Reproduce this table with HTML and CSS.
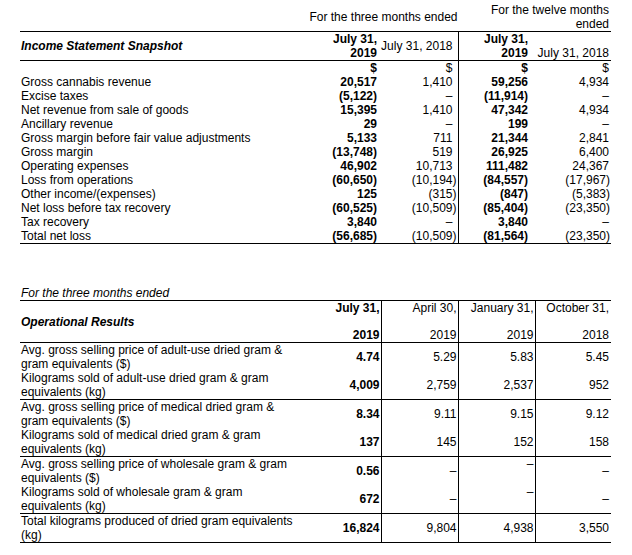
FILE: index.html
```html
<!DOCTYPE html>
<html>
<head>
<meta charset="utf-8">
<link rel="stylesheet" href="styles.css">
</head>
<body>
<div class="page">
<table class="grid snap">
<colgroup><col class="s-label"><col class="s-c1"><col class="s-c2"><col class="s-c3"><col class="s-c4"></colgroup>
<tr class="period">
<td></td>
<td colspan="2" class="center">For the three months ended</td>
<td colspan="2" class="right bottom pr2">For the twelve months<br>ended</td>
</tr>
<tr class="dates">
<td class="title">Income Statement Snapshot</td>
<td class="right b pr3">July 31,<br>2019</td>
<td class="right pr5">July 31, 2018</td>
<td class="right b pr3 sep">July 31,<br>2019</td>
<td class="right pr2 bottom">July 31, 2018</td>
</tr>
<tr><td></td><td class="right b pr3">$</td><td class="right pr5">$</td><td class="right b pr3 sep">$</td><td class="right pr2">$</td></tr>
<tr><td>Gross cannabis revenue</td><td class="right b pr3">20,517</td><td class="right pr5">1,410</td><td class="right b pr3 sep">59,256</td><td class="right pr2">4,934</td></tr>
<tr><td>Excise taxes</td><td class="right b pr3">(5,122)</td><td class="right pr5">–</td><td class="right b pr3 sep">(11,914)</td><td class="right pr2">–</td></tr>
<tr><td>Net revenue from sale of goods</td><td class="right b pr3">15,395</td><td class="right pr5">1,410</td><td class="right b pr3 sep">47,342</td><td class="right pr2">4,934</td></tr>
<tr><td>Ancillary revenue</td><td class="right b pr3">29</td><td class="right pr5">–</td><td class="right b pr3 sep">199</td><td class="right pr2">–</td></tr>
<tr><td>Gross margin before fair value adjustments</td><td class="right b pr3">5,133</td><td class="right pr5">711</td><td class="right b pr3 sep">21,344</td><td class="right pr2">2,841</td></tr>
<tr><td>Gross margin</td><td class="right b pr3">(13,748)</td><td class="right pr5">519</td><td class="right b pr3 sep">26,925</td><td class="right pr2">6,400</td></tr>
<tr><td>Operating expenses</td><td class="right b pr3">46,902</td><td class="right pr5">10,713</td><td class="right b pr3 sep">111,482</td><td class="right pr2">24,367</td></tr>
<tr><td>Loss from operations</td><td class="right b pr3">(60,650)</td><td class="right pr1">(10,194)</td><td class="right b pr3 sep">(84,557)</td><td class="right pr1">(17,967)</td></tr>
<tr><td>Other income/(expenses)</td><td class="right b pr3">125</td><td class="right pr1">(315)</td><td class="right b pr3 sep">(847)</td><td class="right pr1">(5,383)</td></tr>
<tr><td>Net loss before tax recovery</td><td class="right b pr3">(60,525)</td><td class="right pr1">(10,509)</td><td class="right b pr3 sep">(85,404)</td><td class="right pr1">(23,350)</td></tr>
<tr><td>Tax recovery</td><td class="right b pr3">3,840</td><td class="right pr5">–</td><td class="right b pr3 sep">3,840</td><td class="right pr2">–</td></tr>
<tr class="last"><td>Total net loss</td><td class="right b pr3">(56,685)</td><td class="right pr1">(10,509)</td><td class="right b pr3 sep">(81,564)</td><td class="right pr1">(23,350)</td></tr>
</table>

<table class="grid ops">
<colgroup><col class="o-label"><col class="o-c"><col class="o-c2"><col class="o-c2"><col class="o-c4"></colgroup>
<tr class="cap"><td colspan="5" class="it">For the three months ended</td></tr>
<tr class="head">
<td class="title">Operational Results</td>
<td class="vr b"><div class="stack"><span>July 31,</span><span>2019</span></div></td>
<td class="vr"><div class="stack"><span>April 30,</span><span>2019</span></div></td>
<td class="vr"><div class="stack"><span>January 31,</span><span>2019</span></div></td>
<td class="last-c"><div class="stack"><span>October 31,</span><span>2018</span></div></td>
</tr>
<tr class="dbl"><td>Avg. gross selling price of adult-use dried gram &amp;<br>gram equivalents ($)</td><td class="vr b">4.74</td><td class="vr">5.29</td><td class="vr">5.83</td><td class="last-c">5.45</td></tr>
<tr class="dbl grp"><td>Kilograms sold of adult-use dried gram &amp; gram<br>equivalents (kg)</td><td class="vr b">4,009</td><td class="vr">2,759</td><td class="vr">2,537</td><td class="last-c">952</td></tr>
<tr class="dbl"><td>Avg. gross selling price of medical dried gram &amp;<br>gram equivalents ($)</td><td class="vr b">8.34</td><td class="vr">9.11</td><td class="vr">9.15</td><td class="last-c">9.12</td></tr>
<tr class="dbl grp"><td>Kilograms sold of medical dried gram &amp; gram<br>equivalents (kg)</td><td class="vr b">137</td><td class="vr">145</td><td class="vr">152</td><td class="last-c">158</td></tr>
<tr class="dbl"><td>Avg. gross selling price of wholesale gram &amp; gram<br>equivalents ($)</td><td class="vr b">0.56</td><td class="vr">–</td><td class="vr top">–</td><td class="last-c">–</td></tr>
<tr class="dbl grp"><td>Kilograms sold of wholesale gram &amp; gram<br>equivalents (kg)</td><td class="vr b">672</td><td class="vr">–</td><td class="vr top">–</td><td class="last-c">–</td></tr>
<tr class="dbl grp"><td>Total kilograms produced of dried gram equivalents<br>(kg)</td><td class="vr b">16,824</td><td class="vr">9,804</td><td class="vr">4,938</td><td class="last-c">3,550</td></tr>
</table>
</div>
</body>
</html>
```

FILE: styles.css
```css
html, body {
  margin: 0;
  padding: 0;
  background: #ffffff;
}

body {
  font-family: "Liberation Sans", Arial, sans-serif;
  font-size: 12px;
  line-height: 14px;
  color: #000000;
}

.page {
  padding: 3px 0 0 20px;
}

.grid {
  border-collapse: collapse;
  table-layout: fixed;
  width: 591px;
}

.grid td {
  padding: 0 0 0 1px;
  vertical-align: middle;
  white-space: nowrap;
}

/* snapshot table */
.s-label { width: 288px; }
.s-c1 { width: 72px; }
.s-c2 { width: 78px; }
.s-c3 { width: 73px; }
.s-c4 { width: 80px; }

.period td {
  height: 27px;
  border-bottom: 1px solid #000;
}

.dates td {
  height: 28px;
  border-bottom: 1px solid #000;
}

.title {
  font-weight: bold;
  font-style: italic;
}

.center { text-align: center; }
.right { text-align: right; }
.bottom { vertical-align: bottom !important; }
.top { vertical-align: top !important; }
.b { font-weight: bold; }
.it { font-style: italic; }

.pr0 { padding-right: 0 !important; }
.pr1 { padding-right: 1px !important; }
.pr2 { padding-right: 2px !important; }
.pr3 { padding-right: 3px !important; }
.pr5 { padding-right: 5px !important; }

.sep { border-left: 1px solid #000; }

.snap tr.last td { border-bottom: 1px solid #000; }

/* operational table */
.ops { margin-top: 42px; }

.o-label { width: 310px; }
.o-c { width: 51px; }
.o-c2 { width: 77px; }
.o-c4 { width: 76px; }

.cap td {
  height: 14px;
  border-bottom: 1px solid #000;
}

.head td {
  height: 41px;
  border-bottom: 1px solid #000;
}

.stack {
  height: 41px;
  display: flex;
  flex-direction: column;
  justify-content: space-between;
}

.vr {
  text-align: right;
  padding-right: 1px !important;
  border-right: 1px solid #000;
}

.last-c {
  text-align: right;
  padding-right: 2px !important;
}

.dbl td { height: 28px; }

.grp td { border-bottom: 1px solid #000; }
```
